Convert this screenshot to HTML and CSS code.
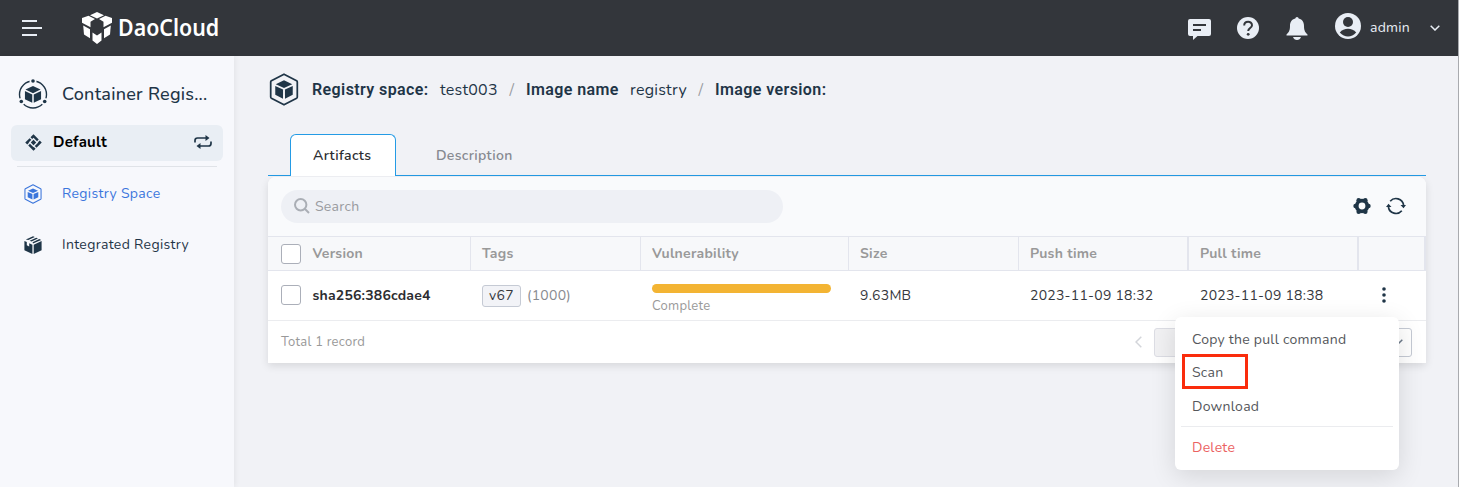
FILE: index.html
```html
<!DOCTYPE html>
<html lang="en">
<head>
<meta charset="utf-8">
<title>DaoCloud Container Registry</title>
<link rel="stylesheet" href="styles.css">
</head>
<body>
<svg class="sprite" aria-hidden="true">
  <symbol id="cube" viewBox="0 0 18 18">
    <path d="M9 0L17 3.800 9 7.600 1 3.800Z"/><path d="M0.400 5.400L8.200 9V17.800L0.400 14.100Z"/><path d="M17.600 5.400L9.800 9V17.800L17.600 14.100Z"/>
  </symbol>
  <symbol id="hexcube" viewBox="0 0 30 34">
    <path d="M15 1.200L28 8Q28.700 8.400 28.700 9.200V24.800Q28.700 25.600 28 26L15 32.800 2 26Q1.300 25.600 1.300 24.800V9.200Q1.300 8.400 2 8Z" fill="none" stroke="currentColor" stroke-width="1.800" stroke-linejoin="round"/>
    <path d="M15 7.500L23.500 11.500 15 15.500 6.500 11.500Z"/><path d="M6 13.400L14 17V26.500L6 22.500Z"/><path d="M24 13.400L16 17V26.500L24 22.500Z"/>
  </symbol>
</svg>
<div class="app">
  <header class="topbar">
    <svg class="burger" viewBox="0 0 20 16"><path d="M0 1h15M0 8h20M0 15h15"/></svg>
    <svg class="logo-mark" viewBox="0 0 30 32"><path d="M15 0L22 3.200 15 6.400 8 3.200Z"/><path d="M6.500 3.800L13 7 8.500 9.700V15.200L0 10.800V6Z"/><path d="M23.500 3.800L17 7 21.500 9.700V15.200L30 10.800V6Z"/><path d="M1.200 13.500L8 17.200V26.300L2 22.500Z"/><path d="M28.800 13.500L22 17.200V26.300L28 22.500Z"/><path d="M10.500 20.500L15 23.500 19.500 20.500V28.500L15 32 10.500 28.500Z"/></svg>
    <span class="logo-text">DaoCloud</span>
    <div class="tools">
      <svg class="chat" viewBox="0 0 23 21"><path d="M2 0H21Q23 0 23 2V15Q23 17 21 17H9.500L5 21V17H2Q0 17 0 15V2Q0 0 2 0Z"/><path class="cut" d="M5 6H18M5 11H13"/></svg>
      <svg class="help" viewBox="0 0 22 22"><circle cx="11" cy="11" r="11"/><path class="cut" d="M7.200 8.500C7.200 3.500 15 3.600 15 8.200C15 11 11.200 11 11.200 14"/><circle class="dot" cx="11.200" cy="17.300" r="1.400"/></svg>
      <svg class="bell" viewBox="0 0 22 23"><path d="M11 0Q12.500 0 12.700 1.600C16.500 2.500 18 5.500 18 9C18 14 19.500 15.500 21.500 17.500V18.500H.500V17.500C2.500 15.500 4 14 4 9C4 5.500 5.500 2.500 9.300 1.600Q9.500 0 11 0Z"/><path d="M7 20H15Q14 23 11 23 8 23 7 20Z"/></svg>
      <svg class="avatar" viewBox="0 0 26 26"><circle cx="13" cy="13" r="13"/><circle class="dot" cx="13" cy="9" r="5"/><path class="dot" d="M4.800 19.500Q8 15.800 13 15.800T21.200 19.500Q17.500 23.500 13 23.500T4.800 19.500Z"/></svg>
      <span class="user">admin</span>
      <svg class="chev" viewBox="0 0 10 6"><path d="M.7.700L5 5 9.300.700"/></svg>
    </div>
  </header>
  <div class="body">
    <aside class="sidebar">
      <div class="side-title">
        <svg class="orbit" viewBox="0 0 30 30"><circle class="ring" cx="15" cy="15.500" r="13.500"/><circle class="gap" cx="15" cy="2" r="3.500"/><circle class="gap" cx="3.300" cy="22.500" r="3.500"/><circle class="gap" cx="26.700" cy="22.500" r="3.500"/><circle cx="15" cy="2" r="1.800"/><circle cx="3.300" cy="22.500" r="1.800"/><circle cx="26.700" cy="22.500" r="1.800"/><use href="#cube" x="6.500" y="7" width="17" height="17"/></svg>
        <span class="t-title">Container Regis...</span>
      </div>
      <div class="workspace">
        <svg class="diamond" viewBox="0 0 16 16"><g transform="rotate(45 8 8)"><path d="M2.500 2.500H9.500V4.800H4.800V6.500H2.500ZM10.800 2.500H13.500V9.500H11.200V4.800H10.800ZM13.500 10.700V13.500H6.500V11.200H11.200V10.700ZM5.200 13.500H2.500V7.700H4.800V11.200H5.200Z"/><path d="M6.200 6.200H9.800V9.800H6.200Z"/></g></svg>
        <span class="t-default">Default</span>
        <svg class="swap" viewBox="0 0 18 14"><path class="line" d="M1 7.500V5.500Q1 3 3.500 3H13M17 6.500V8.500Q17 11 14.500 11H5"/><path d="M11.500 0L15.500 3 11.500 6ZM6.500 8L2.500 11 6.500 14Z"/></svg>
      </div>
      <nav class="nav">
        <a class="nav-item active"><svg class="ni"><use href="#hexcube"/></svg><span class="t-space">Registry Space</span></a>
        <a class="nav-item"><svg class="ni box" viewBox="0 0 18 18"><path d="M5.200 2L9 .300 10.800 1.100 4.300 4.100 1.800 3.500Z M12.200 1.700L14 2.500 7.500 5.600 5.700 4.800Z M15.300 3L17.200 3.900 9 7.600 8.600 6.200Z"/><path d="M.400 5L2.800 6.100V9.300L5.200 10.400V7.200L8.400 8.700V17.900L.400 14.300ZM17.600 5L9.700 8.700V17.900L17.600 14.300Z"/></svg><span class="t-integrated">Integrated Registry</span></a>
      </nav>
    </aside>
    <main class="content">
      <div class="crumbs">
        <svg class="crumb-icon"><use href="#hexcube"/></svg>
        <b class="c1">Registry space:</b><span class="c2">test003</span><i>/</i><b class="c3">Image name</b><span class="c4">registry</span><i>/</i><b class="c5">Image version:</b>
      </div>
      <div class="tabs"><div class="tab on"><span>Artifacts</span></div><div class="tab"><span>Description</span></div></div>
      <section class="card">
        <div class="toolbar">
          <div class="search"><svg viewBox="0 0 16 16"><circle cx="6.700" cy="6.700" r="5.700"/><path d="M11 11L15 15"/></svg><span>Search</span></div>
          <svg class="gear" viewBox="0 0 18 18"><circle class="hub" cx="9" cy="9" r="5.300"/><circle cx="2.600" cy="9" r="2.300"/><circle cx="15.400" cy="9" r="2.300"/><circle cx="5.700" cy="3.300" r="2.300"/><circle cx="12.300" cy="3.300" r="2.300"/><circle cx="5.700" cy="14.700" r="2.300"/><circle cx="12.300" cy="14.700" r="2.300"/></svg>
          <svg class="refresh" viewBox="0 0 20 18"><path class="line" d="M4.200 4.200A7.700 7.700 0 0 1 17.600 8M15.800 13.800A7.700 7.700 0 0 1 2.400 10"/><path d="M14.500 8H20L17.500 11.200ZM0 10H5.500L2.500 6.800Z"/></svg>
        </div>
        <div class="row head">
          <div class="cell"><span class="check"></span><span>Version</span></div><div class="cell"><span>Tags</span></div><div class="cell"><span>Vulnerability</span></div><div class="cell"><span>Size</span></div><div class="cell"><span>Push time</span></div><div class="cell"><span>Pull time</span></div><div class="cell"></div>
        </div>
        <div class="row data">
          <div class="cell"><span class="check"></span><span class="sha">sha256:386cdae4</span></div>
          <div class="cell"><span class="tag">v67</span><span class="count">(1000)</span></div>
          <div class="cell vuln"><span class="bar"></span><span class="complete">Complete</span></div>
          <div class="cell"><span>9.63MB</span></div>
          <div class="cell"><span>2023-11-09 18:32</span></div>
          <div class="cell"><span>2023-11-09 18:38</span></div>
          <div class="cell more"><svg viewBox="0 0 4 16"><circle cx="2" cy="2" r="1.800"/><circle cx="2" cy="8" r="1.800"/><circle cx="2" cy="14" r="1.800"/></svg></div>
        </div>
        <div class="foot"><span class="total">Total 1 record</span><svg class="prev" viewBox="0 0 7 12"><path d="M6.300.700L1 6 6.300 11.300"/></svg><div class="page"></div><div class="pagesize"><svg viewBox="0 0 10 6"><path d="M.7.700L5 5 9.300.700"/></svg></div></div>
      </section>
      <div class="menu">
        <span class="m1">Copy the pull command</span><span class="m2">Scan</span><span class="m3">Download</span><hr><span class="m4">Delete</span>
        <div class="marker"></div>
      </div>
    </main>
  </div>
</div>
</body>
</html>
```
FILE: styles.css
```css
* { box-sizing: border-box; }
body { margin: 0; font: 14px/20px "Nunito", "Noto Sans", sans-serif; letter-spacing: .25px; color: #36383d; overflow: hidden; }
svg { display: block; flex: none; fill: currentColor; }
span, b { white-space: nowrap; }
.sprite { position: absolute; width: 0; height: 0; }
.app { height: 487px; border-right: 1px solid #a9abaf; background: #f1f2f6; display: flex; flex-direction: column; }
.topbar { height: 56px; flex: none; background: #33363b; color: #e9eef5; display: flex; align-items: center; padding: 0 18px 0 22px; }
.burger { width: 20px; height: 16px; }
.burger path { stroke: #e9eef5; stroke-width: 2; }
.logo-mark { width: 30px; height: 32px; margin-left: 40px; color: #fff; }
.logo-text { font: 600 24px/28px "Noto Sans", sans-serif; letter-spacing: 0; color: #fff; margin: -3px 0 0 6px; transform: scaleX(.89); transform-origin: left center; }
.tools { margin-left: auto; display: flex; align-items: center; }
.chat { width: 23px; height: 21px; margin-top: 3px; }
.help { width: 22px; height: 22px; margin-left: 26px; }
.bell { width: 22px; height: 23px; margin-left: 27px; }
.avatar { width: 26px; height: 26px; margin: -4px 0 0 27px; }
.cut { fill: none; stroke: #33363b; stroke-width: 2; }
.dot { fill: #33363b; }
.user { margin: -1px 0 0 9px; width: 40px; }
.chev { width: 10px; height: 6px; margin-left: 20px; }
.chev path, .prev path, .pagesize path { fill: none; stroke: currentColor; stroke-width: 1.5; }
.body { flex: 1; display: flex; }
.sidebar { width: 234px; background: #f7f8fc; box-shadow: 1px 0 6px #0001; color: #1f3547; padding: 22px 11px; }
.side-title { height: 32px; display: flex; align-items: center; gap: 14px; padding-left: 7px; font-weight: 500; font-size: 18px; }
.orbit { width: 30px; height: 30px; }
.ring { fill: none; stroke: #1f3547; stroke-width: 1.4; }
.gap { fill: #f7f8fc; }
.workspace { margin-top: 15px; height: 36px; border-radius: 6px; background: #e9eef4; display: flex; align-items: center; padding: 0 11px 2px 14px; }
.diamond { width: 17px; height: 17px; }
.t-default { font-weight: 700; font-size: 15px; color: #000; margin-left: 11px; }
.swap { width: 18px; height: 14px; margin-left: auto; }
.line { fill: none; stroke: currentColor; stroke-width: 1.7; }
.nav { margin: 5px 6px 0; border-top: 1px solid #e0e3e8; padding-top: 1px; letter-spacing: .33px; }
.nav-item { height: 51px; display: flex; align-items: center; gap: 19px; padding-left: 6px; }
.nav-item.active { color: #3b76dc; }
.ni { width: 20px; height: 20px; }
.ni.box { width: 18px; height: 18px; margin: 0 1px; }
.content { flex: 1; position: relative; padding: 17px 32px 0 34px; }
.crumbs { height: 33px; display: flex; align-items: center; color: #1f3547; font-size: 16px; }
.crumb-icon { width: 30px; height: 33px; margin: 0 13px 0 1px; }
.crumbs b { font-family: Roboto, sans-serif; font-weight: 600; letter-spacing: .4px; }
.crumbs i { color: #999ca2; width: 28px; text-align: center; font-style: normal; }
.c1 { width: 117px; margin-right: 11px; }
.c2 { width: 58px; }
.c3 { width: 93px; margin-right: 11px; }
.c4 { width: 57px; }
.tabs { display: flex; height: 42px; margin-top: 28px; padding-left: 22px; border-bottom: 1px solid #249be5; }
.tab { width: 106px; height: 42px; padding: 1px 0 0 23px; line-height: 41px; font-weight: 600; color: #868990; letter-spacing: .35px; }
.tab.on { border: 1px solid #249be5; border-bottom: 0; border-radius: 6px 6px 0 0; background: #fff; color: #2c2d31; padding: 0 0 0 22px; margin-right: 17px; }
.card { margin-top: 1px; height: 186px; border-radius: 8px 8px 0 0; background: #fff; box-shadow: 0 3px 8px #0000001c; }
.toolbar { height: 59px; display: flex; align-items: center; padding: 0 20px 0 13px; background: #f9fafc; border-radius: 8px 8px 0 0; color: #1f3547; }
.search { width: 502px; height: 33px; border-radius: 17px; background: #eef0f5; color: #999b9f; display: flex; align-items: center; padding-left: 13px; gap: 5px; margin-right: auto; }
.search svg { width: 16px; height: 16px; margin-top: -2px; fill: none; stroke: #aaaeb5; stroke-width: 2; }
.gear { width: 18px; height: 18px; margin: -1px 15px 0 0; }
.hub { fill: none; stroke: currentColor; stroke-width: 3.8; }
.refresh { width: 20px; height: 18px; margin-top: -1px; }
.row { display: grid; grid-template-columns: 203px 170px 208px 170px 170px 170px 67px; border-bottom: 1px solid #e3e5ed; }
.head { height: 35px; background: #f7f8fa; border-top: 1px solid #e3e5ed; color: #999; font-weight: 700; }
.data { height: 50px; border-color: #ebecef; }
.cell { display: flex; align-items: center; padding-left: 11px; }
.cell:first-child { padding-left: 13px; }
.head .cell { border-right: 1px solid #e3e5ed; }
.head .cell:nth-child(n+5) { border-right-width: 2px; }
.check { width: 20px; height: 20px; border: 1px solid #abafb9; border-radius: 3px; background: #fff; margin-right: 11.5px; }
.data .check { margin-top: -1px; }
.sha { font-weight: 700; color: #2c2d31; letter-spacing: .2px; }
.tag { width: 39px; height: 22px; line-height: 20px; text-align: center; background: #f2f3f7; border: 1px solid #c5cad4; border-radius: 3px; }
.count { color: #888b90; margin: 1px 0 0 6px; }
.vuln { flex-direction: column; align-items: flex-start; justify-content: flex-start; padding-top: 13px; }
.bar { width: 179px; height: 9px; border-radius: 5px; background: #f3b433; }
.complete, .total { font-size: 13px; line-height: 18px; color: #999; }
.complete { margin-top: 4px; }
.more { padding: 0 0 1px 23px; color: #1f3547; }
.more svg { width: 4px; height: 16px; }
.foot { height: 42px; display: flex; align-items: center; padding: 0 14px 0 13px; }
.prev { width: 7px; height: 12px; margin-left: auto; margin-right: 12px; color: #d3d5da; }
.page { width: 54px; height: 29px; border: 1px solid #dcdde4; border-radius: 3px; background: #f1f1f3; }
.pagesize { width: 100px; height: 29px; margin-left: 104px; border: 1px solid #c5cad4; border-radius: 3px; display: flex; align-items: center; justify-content: flex-end; padding-right: 8px; color: #6d7b8b; }
.pagesize svg { width: 10px; height: 6px; }
.menu { position: absolute; left: 941px; top: 261px; width: 224px; height: 153px; border-radius: 6px; background: #fff; box-shadow: 0 6px 26px #0000001f; padding: 5px; display: flex; flex-direction: column; color: #55575b; }
.menu > span { height: 34px; line-height: 34px; padding-left: 12px; }
.menu .m1 { line-height: 35px; }
.menu hr { width: 212px; margin: 2px 0 3px 1px; border: 0; border-top: 1px solid #ebecef; }
.menu .m4 { color: #eb6262; line-height: 35px; }
.marker { position: absolute; left: 7px; top: 37px; width: 66px; height: 35px; border: 3px solid #fa2c0c; }
```
